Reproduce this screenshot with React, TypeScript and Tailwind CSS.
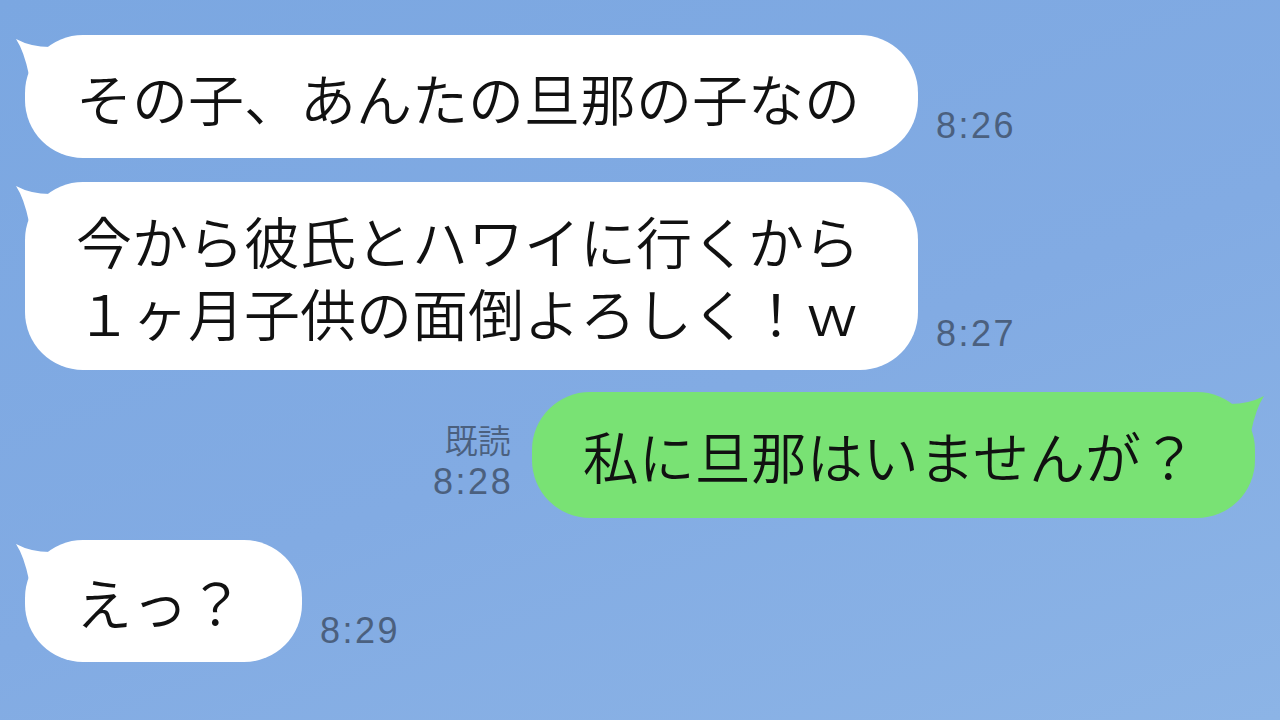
import React from "react";

const Tail = ({ color, flip }: { color: string; flip?: boolean }) => (
  <svg
    width="60"
    height="60"
    viewBox="0 0 60 60"
    className={flip ? "absolute top-0 right-[-12px] -scale-x-100" : "absolute top-0 left-[-12px]"}
  >
    <path d="M3 4 Q18 12 37 12 L60 8 L60 60 L16 60 L16 40 Q11 16 3 4 Z" fill={color} />
  </svg>
);

const Time = ({ t, mb }: { t: string; mb: string }) => (
  <div
    className={`ml-[18px] text-[36px] leading-[36px] tracking-[2.5px] text-[#4b607e] font-['Liberation_Sans',sans-serif] ${mb}`}
  >
    {t}
  </div>
);

export default function App() {
  return (
    <div className="w-[1280px] h-[720px] overflow-hidden bg-[linear-gradient(160deg,#7ba7e1_0%,#82abe3_55%,#8cb4e6_100%)] font-['Noto_Sans_CJK_JP','Noto_Sans_CJK_SC',sans-serif] font-[350] text-[#111] flex flex-col pt-[35px]">
      {/* message 1 */}
      <div className="flex items-end pl-[25px]">
        <div className="relative bg-white rounded-[58px] h-[123px] flex items-center pl-[51px] pr-[58px] text-[56px] leading-[72px]">
          <Tail color="#ffffff" />
          <span className="relative">その子、あんたの旦那の子なの</span>
        </div>
        <Time t="8:26" mb="mb-[14px]" />
      </div>

      {/* message 2 */}
      <div className="flex items-end pl-[25px] mt-[24px]">
        <div className="relative bg-white rounded-[58px] h-[188px] flex items-center pl-[51px] pr-[58px] text-[56px] leading-[72px]">
          <Tail color="#ffffff" />
          <p className="relative">
            今から彼氏とハワイに行くから
            <br />
            １ヶ月子供の面倒よろしく！ｗ
          </p>
        </div>
        <Time t="8:27" mb="mb-[18px]" />
      </div>

      {/* message 3 (mine) */}
      <div className="flex items-end justify-end pr-[25px] mt-[22px]">
        <div className="flex flex-col items-end mr-[21px] mb-[18px] text-[#4b607e]">
          <div className="text-[33px] leading-[33px] mb-[8px]">既読</div>
          <div className="text-[36px] leading-[36px] tracking-[2.5px] mr-[-2.5px] font-['Liberation_Sans',sans-serif]">8:28</div>
        </div>
        <div className="relative bg-[#79e274] rounded-[58px] h-[126px] flex items-center pl-[51px] pr-[58px] text-[56px] leading-[72px]">
          <Tail color="#79e274" flip />
          <span className="relative">私に旦那はいませんが？</span>
        </div>
      </div>

      {/* message 4 */}
      <div className="flex items-end pl-[25px] mt-[22px]">
        <div className="relative bg-white rounded-[58px] h-[122px] flex items-center pl-[51px] pr-[58px] text-[56px] leading-[72px]">
          <Tail color="#ffffff" />
          <span className="relative">えっ？</span>
        </div>
        <Time t="8:29" mb="mb-[13px]" />
      </div>
    </div>
  );
}
